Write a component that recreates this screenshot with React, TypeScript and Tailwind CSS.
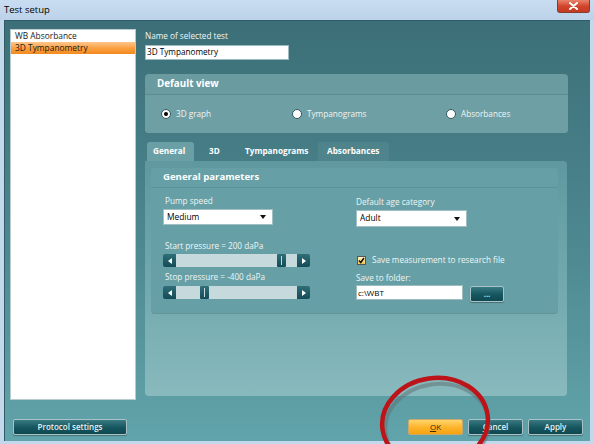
import React from 'react'

const font = { fontFamily: '"Open Sans", "Noto Sans", "Liberation Sans", sans-serif' }

function Radio({ label, checked, w }: { label: string; checked?: boolean; w: string }) {
  return (
    <div className={`${w} flex items-center gap-[5px]`}>
      <div className="flex h-[10px] w-[10px] items-center justify-center rounded-full border border-[#34585d] bg-white">
        {checked && <div className="h-[4px] w-[4px] rounded-full bg-black" />}
      </div>
      <span className="text-[8.2px] text-[#eef5f5]">{label}</span>
    </div>
  )
}

function Select({ value, w, h }: { value: string; w: string; h: string }) {
  return (
    <div className={`${w} ${h} flex items-center justify-between border border-[#9fbfc3] bg-white pl-[3px] pr-[6px]`}>
      <span className="text-[8.4px] text-black">{value}</span>
      <svg width="6" height="4" viewBox="0 0 6 4">
        <path d="M0 0h6L3 4z" fill="#111" />
      </svg>
    </div>
  )
}

function Slider({ thumb }: { thumb: number }) {
  return (
    <div className="relative flex h-[13px] w-[147px]">
      <div className="flex w-[13px] items-center justify-center rounded-l-[2px] bg-gradient-to-b from-[#2f6e78] to-[#134c56]">
        <svg width="4" height="6" viewBox="0 0 4 6">
          <path d="M4 0v6L0 3z" fill="#fff" />
        </svg>
      </div>
      <div className="flex-1 bg-[#c6dadd]" />
      <div className="flex w-[13px] items-center justify-center rounded-r-[2px] bg-gradient-to-b from-[#2f6e78] to-[#134c56]">
        <svg width="4" height="6" viewBox="0 0 4 6">
          <path d="M0 0v6l4-3z" fill="#fff" />
        </svg>
      </div>
      <div
        className="absolute top-0 flex h-[13px] w-[9px] items-center justify-center rounded-[1px] bg-gradient-to-b from-[#2f6e78] to-[#134c56]"
        style={{ left: thumb }}
      >
        <div className="h-[9px] w-[1px] bg-[#c6dadd]" />
      </div>
    </div>
  )
}

function DarkButton({ label, w, underline }: { label: string; w: string; underline?: string }) {
  return (
    <div
      className={`${w} flex h-[16px] items-center justify-center rounded-[2px] border border-[#a9c3c6] bg-gradient-to-b from-[#3a7a84] via-[#175861] to-[#0f4851] text-[8px] font-semibold text-[#e6f1f2] shadow-[0_1px_1px_rgba(0,0,0,0.3)]`}
    >
      {underline ? (
        <span>
          <span className="underline">{underline}</span>
          {label}
        </span>
      ) : (
        label
      )}
    </div>
  )
}

export default function App() {
  return (
    <div className="relative h-[444px] w-[594px] overflow-hidden bg-[#c4d8ec]" style={font}>
      {/* Title bar */}
      <div className="relative flex h-[20px] items-center bg-gradient-to-b from-[#c9ddf1] to-[#bcd2e9] pl-[4px]">
        <span className="text-[9.5px] text-black">Test setup</span>
        <div className="absolute right-[4px] top-0 flex h-[13px] w-[33px] items-center justify-center rounded-b-[3px] border border-t-0 border-[#8a3b2f] bg-gradient-to-b from-[#e8826c] via-[#d2452c] to-[#c23a22]">
          <svg width="9" height="8" viewBox="0 0 9 8">
            <path d="M1 1l7 6M8 1l-7 6" stroke="#fff" strokeWidth="2" strokeLinecap="round" />
          </svg>
        </div>
      </div>

      <div className="flex">
        <div className="w-[4px]" />
        {/* Dialog body */}
        <div className="flex h-[421px] w-[586px] flex-col border-t border-l border-[#2f5c66] bg-gradient-to-b from-[#3c6f78] via-[#4c868e] to-[#62a4ab] pt-[8px] pb-[6px] pl-[5px] pr-[7px]">
          <div className="flex h-[371px] gap-[9px]">
            {/* Test list */}
            <div className="flex w-[126px] flex-col border border-[#b7cbd0] bg-white text-[8.4px] text-[#1a1a1a]">
              <div className="h-[12px] pl-[4px] leading-[12px]">WB Absorbance</div>
              <div className="h-[12px] bg-gradient-to-b from-[#ffc78a] via-[#faa040] to-[#f28a1c] pl-[4px] leading-[12px]">
                3D Tympanometry
              </div>
            </div>

            {/* Right column */}
            <div className="flex w-[423px] flex-col">
              <div className="h-[14px] text-[8.2px] leading-[14px] text-[#eef5f5]">Name of selected test</div>
              <div className="mt-[2px] flex h-[15px] w-[144px] items-center border border-[#9cbcc0] bg-white pl-[1px] text-[8.2px] text-black">
                3D Tympanometry
              </div>

              {/* Default view */}
              <div className="mt-[14px] flex h-[59px] flex-col rounded-[4px] bg-[#6a9ba1]">
                <div className="flex h-[21px] items-center border-b border-[#5b8c92] pl-[12px] text-[9.8px] font-bold text-white">
                  Default view
                </div>
                <div className="flex flex-1 items-center rounded-b-[4px] bg-[#6e9fa4] pl-[16px]">
                  <Radio label="3D graph" checked w="w-[131px]" />
                  <Radio label="Tympanograms" w="w-[154px]" />
                  <Radio label="Absorbances" w="w-[100px]" />
                </div>
              </div>

              {/* Tabs */}
              <div className="mt-[9px] flex h-[19px] items-stretch pl-[2px] text-[8.2px] font-bold text-white">
                <div className="flex w-[47px] items-center rounded-t-[3px] bg-[#6a9fa5] pl-[6px]">General</div>
                <div className="flex w-[43px] items-center pl-[15px]">3D</div>
                <div className="flex w-[81px] items-center pl-[8px]">Tympanograms</div>
                <div className="flex w-[71px] items-center rounded-t-[3px] bg-white/5 pl-[9px]">Absorbances</div>
              </div>

              {/* Tab content */}
              <div className="flex h-[235px] w-[422px] flex-col rounded-b-[4px] rounded-tr-[4px] bg-gradient-to-b from-[#5f999f] via-[#70a8ad] to-[#88b9bd] pl-[6px] pr-[9px] pt-[7px]">
                <div className="flex h-[145px] flex-col rounded-[4px] bg-[#66a0a6] shadow-[0_1px_0_rgba(0,0,0,0.15)]">
                  <div className="flex h-[20px] items-center border-b border-[#5a9399] pl-[12px] text-[9.6px] font-bold text-white">
                    General parameters
                  </div>
                  <div className="flex pl-[12px] text-[8.2px] text-[#eef5f5]">
                    <div className="flex w-[193px] flex-col">
                      <div className="mt-[6px] h-[14px] pl-[2px] leading-[14px]">Pump speed</div>
                      <div className="mt-[1px]">
                        <Select value="Medium" w="w-[110px]" h="h-[16px]" />
                      </div>
                      <div className="mt-[14px] h-[14px] pl-[2px] leading-[14px]">Start pressure = 200 daPa</div>
                      <div className="mt-[1px]">
                        <Slider thumb={114} />
                      </div>
                      <div className="mt-[3px] h-[14px] pl-[2px] leading-[14px]">Stop pressure = -400 daPa</div>
                      <div className="mt-[2px]">
                        <Slider thumb={37} />
                      </div>
                    </div>
                    <div className="flex flex-col">
                      <div className="mt-[7px] h-[14px] leading-[14px]">Default age category</div>
                      <div className="mt-[1px]">
                        <Select value="Adult" w="w-[111px]" h="h-[17px]" />
                      </div>
                      <div className="mt-[26px] flex h-[14px] items-center gap-[6px] pl-[1px]">
                        <div className="flex h-[9px] w-[9px] items-center justify-center border border-[#555] bg-gradient-to-b from-[#fff6c8] to-[#f2c64a]">
                          <svg width="7" height="7" viewBox="0 0 7 7">
                            <path d="M1 3.5l1.8 2L6 1" stroke="#111" strokeWidth="1.6" fill="none" />
                          </svg>
                        </div>
                        <span>Save measurement to research file</span>
                      </div>
                      <div className="mt-[4px] h-[14px] leading-[14px]">Save to folder:</div>
                      <div className="flex items-start gap-[7px]">
                        <div className="flex h-[15px] w-[107px] items-center border border-[#9cbcc0] bg-white pl-[1px] text-[8px] text-black">
                          c:\WBT
                        </div>
                        <div className="mt-[1px]">
                          <DarkButton label="..." w="w-[34px]" />
                        </div>
                      </div>
                    </div>
                  </div>
                </div>
              </div>
            </div>
          </div>

          {/* Bottom buttons */}
          <div className="mt-[19px] flex items-center">
            <div className="pl-[3px]">
              <DarkButton label="Protocol settings" w="w-[114px]" />
            </div>
            <div className="ml-auto flex gap-[5px]">
              <div className="flex h-[16px] w-[55px] items-center justify-center rounded-[2px] border border-[#c9a96a] bg-gradient-to-b from-[#ffd66a] via-[#fdb52b] to-[#f5a20f] text-[8px] text-[#3a2a00]">
                <span>
                  <span className="underline">O</span>K
                </span>
              </div>
              <DarkButton label="ancel" underline="C" w="w-[55px]" />
              <DarkButton label="Apply" w="w-[55px]" />
            </div>
          </div>
        </div>
      </div>

      {/* Red annotation ellipse */}
      <svg className="pointer-events-none absolute left-0 top-0" width="594" height="444" viewBox="0 0 594 444">
        <ellipse
          cx="437"
          cy="426"
          rx="52"
          ry="42"
          transform="rotate(-8 437 426)"
          fill="none"
          stroke="#5d6f72"
          strokeOpacity="0.5"
          strokeWidth="4"
        />
        <ellipse
          cx="435"
          cy="422"
          rx="53"
          ry="44"
          transform="rotate(-8 435 422)"
          fill="none"
          stroke="#bd1419"
          strokeWidth="4.5"
        />
      </svg>
    </div>
  )
}
